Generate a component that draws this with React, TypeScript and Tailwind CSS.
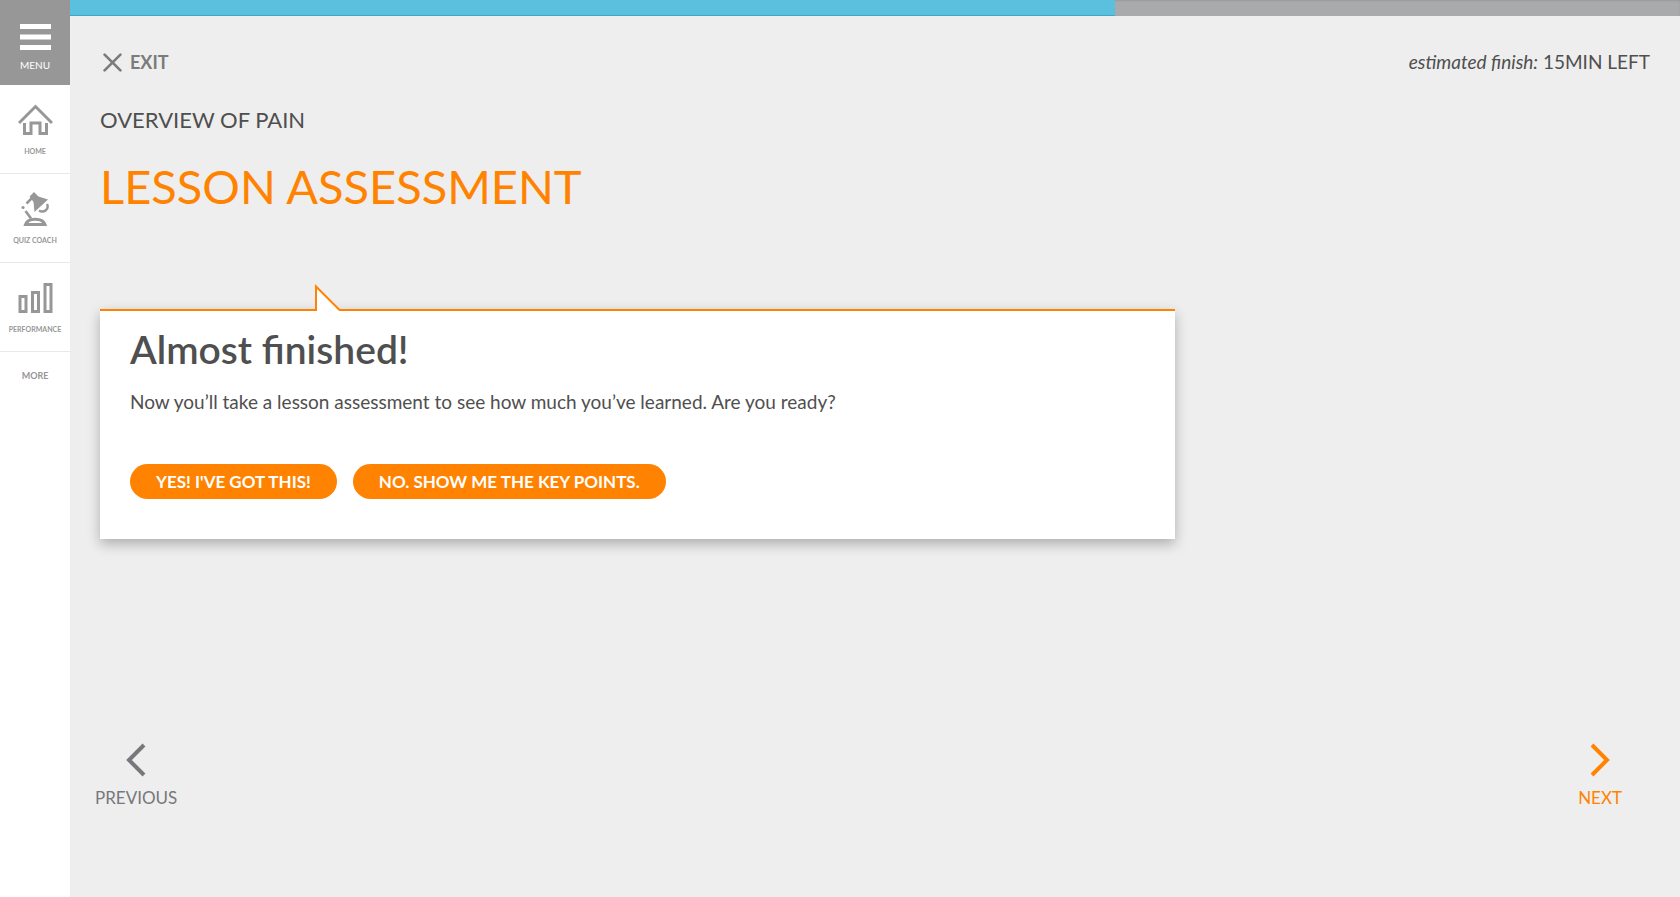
import React from "react";

function HomeIcon() {
  return (
    <svg width="35" height="32" viewBox="0 0 35 32" fill="none" stroke="#979797" strokeWidth="3" aria-hidden="true">
      <path d="M1 19 17.500 2.500 34 19" />
      <path d="M6.500 19v10.500h6.500V19h9v10.500h6.500V19" />
    </svg>
  );
}

function LampIcon() {
  return (
    <svg width="30" height="34" viewBox="0 0 30 34" fill="none" stroke="#979797" aria-hidden="true">
      <path d="M9.500 4.500 14 0l4.500 4.500L28 7.500 14.500 20 13.500 10Z" fill="#979797" stroke="none" />
      <path d="M12 6 6.500 11.500" strokeWidth="2.500" />
      <circle cx="3" cy="15.500" r="1.600" fill="#979797" stroke="none" />
      <path d="M5.500 19 11 26.500" strokeWidth="2.600" />
      <path d="M27 12c2.500 5-3 9.500-8 6.500" strokeWidth="2.400" />
      <path d="M5.500 32.500C8 25.500 22.500 25.500 25 32.500Z" strokeWidth="3" />
    </svg>
  );
}

function BarsIcon() {
  return (
    <svg width="35" height="32" viewBox="0 0 35 32" fill="none" stroke="#979797" strokeWidth="3" aria-hidden="true">
      <path d="M2 14.500h6v15H2zM14.500 10.500h6v19h-6zM27 2.500h6v27h-6z" />
    </svg>
  );
}

const navItems = [
  { label: "HOME", icon: <HomeIcon /> },
  { label: "QUIZ COACH", icon: <LampIcon /> },
  { label: "PERFORMANCE", icon: <BarsIcon /> },
];

function Sidebar() {
  return (
    <nav className="w-[70px] shrink-0 bg-white text-[#979797]">
      <button type="button" className="flex h-[85px] w-full flex-col items-center bg-[#979797] pt-6 text-white">
        <svg width="31" height="26" viewBox="0 0 31 26" fill="currentColor" aria-hidden="true">
          <path d="M0 0h31v5H0zM0 10.500h31v5H0zM0 21h31v5H0z" />
        </svg>
        <span className="mt-[7px] text-[10px] leading-4">MENU</span>
      </button>
      <ul>
        {navItems.map((item) => (
          <li key={item.label} className="h-[89px] border-b border-[#e8e8e8]">
            <a href="#" className="flex flex-col items-center pt-[18px]">
              <span className="flex h-[34px] items-center">{item.icon}</span>
              <span className="mt-1.5 text-[7px] leading-4 font-bold">{item.label}</span>
            </a>
          </li>
        ))}
        <li>
          <a href="#" className="flex h-12 items-center justify-center text-[9px] font-bold">MORE</a>
        </li>
      </ul>
    </nav>
  );
}

export default function App() {
  return (
    <div className="flex min-h-screen bg-[#eeeeee] font-['Lato',sans-serif] text-[#4f4f4f]">
      <Sidebar />
      <div className="flex min-w-0 flex-1 flex-col">
        <div
          className="h-4 bg-[#a9aaac] shadow-[inset_0_1px_2px_rgba(0,0,0,0.1)]"
          role="progressbar"
          aria-label="Lesson progress"
          aria-valuenow={65}
          aria-valuemin={0}
          aria-valuemax={100}
        >
          <div className="h-full border-b border-[#45a5c4] bg-[#5bc0de]" style={{ width: "64.9%" }} />
        </div>
        <main className="px-[30px]">
          <div className="mt-8 flex h-7 items-center justify-between">
            <button type="button" className="flex items-center gap-2 pl-[3px] text-lg font-bold text-[#7b7b7b]">
              <svg width="19" height="19" viewBox="0 0 18 18" fill="none" stroke="currentColor" strokeWidth="2.500" strokeLinecap="round" aria-hidden="true">
                <path d="m1.500 1.500 15 15m0-15-15 15" />
              </svg>
              EXIT
            </button>
            <p className="text-[19px]"><em>estimated finish:</em> 15MIN LEFT</p>
          </div>
          <h2 className="mt-7 text-[22px] leading-8">OVERVIEW OF PAIN</h2>
          <h1 className="mt-5 text-[47px] leading-[60px] text-[#ff8300]">LESSON ASSESSMENT</h1>
          <section className="relative mt-[93px] w-full max-w-[1075px] border-t-2 border-[#ff8300] bg-white px-[30px] pt-[15px] pb-10 shadow-[0_5px_12px_rgba(0,0,0,0.27)]">
            <svg className="absolute -top-[27px] left-[215px]" width="26" height="27" viewBox="0 0 26 27" aria-hidden="true">
              <path d="M1 27V2.500L25 26.500V27Z" fill="#fff" />
              <path d="M1 27V2.500L25 26.500" fill="none" stroke="#ff8300" strokeWidth="2" />
            </svg>
            <h3 className="text-[39px] leading-[46px] font-semibold">Almost finished!</h3>
            <p className="mt-4 text-[19px] leading-7">Now you’ll take a lesson assessment to see how much you’ve learned. Are you ready?</p>
            <div className="mt-12 flex flex-wrap gap-4">
              <button type="button" className="h-[35px] rounded-full bg-[#ff8300] px-[26px] text-[17px] font-bold text-white">YES! I'VE GOT THIS!</button>
              <button type="button" className="h-[35px] rounded-full bg-[#ff8300] px-[26px] text-[17px] font-bold text-white">NO. SHOW ME THE KEY POINTS.</button>
            </div>
          </section>
          <div className="mt-[204px] flex justify-between text-[17px]">
            <a href="#" className="-ml-[5px] flex flex-col items-center gap-2 text-[#77787b]">
              <svg width="20" height="34" viewBox="0 0 20 34" fill="none" stroke="currentColor" strokeWidth="4" aria-hidden="true">
                <path d="M18 2 3 17l15 15" />
              </svg>
              PREVIOUS
            </a>
            <a href="#" className="mr-7 flex flex-col items-center gap-2 text-[#ff8300]">
              <svg width="20" height="34" viewBox="0 0 20 34" fill="none" stroke="currentColor" strokeWidth="4" aria-hidden="true">
                <path d="m2 2 15 15L2 32" />
              </svg>
              NEXT
            </a>
          </div>
        </main>
      </div>
    </div>
  );
}
